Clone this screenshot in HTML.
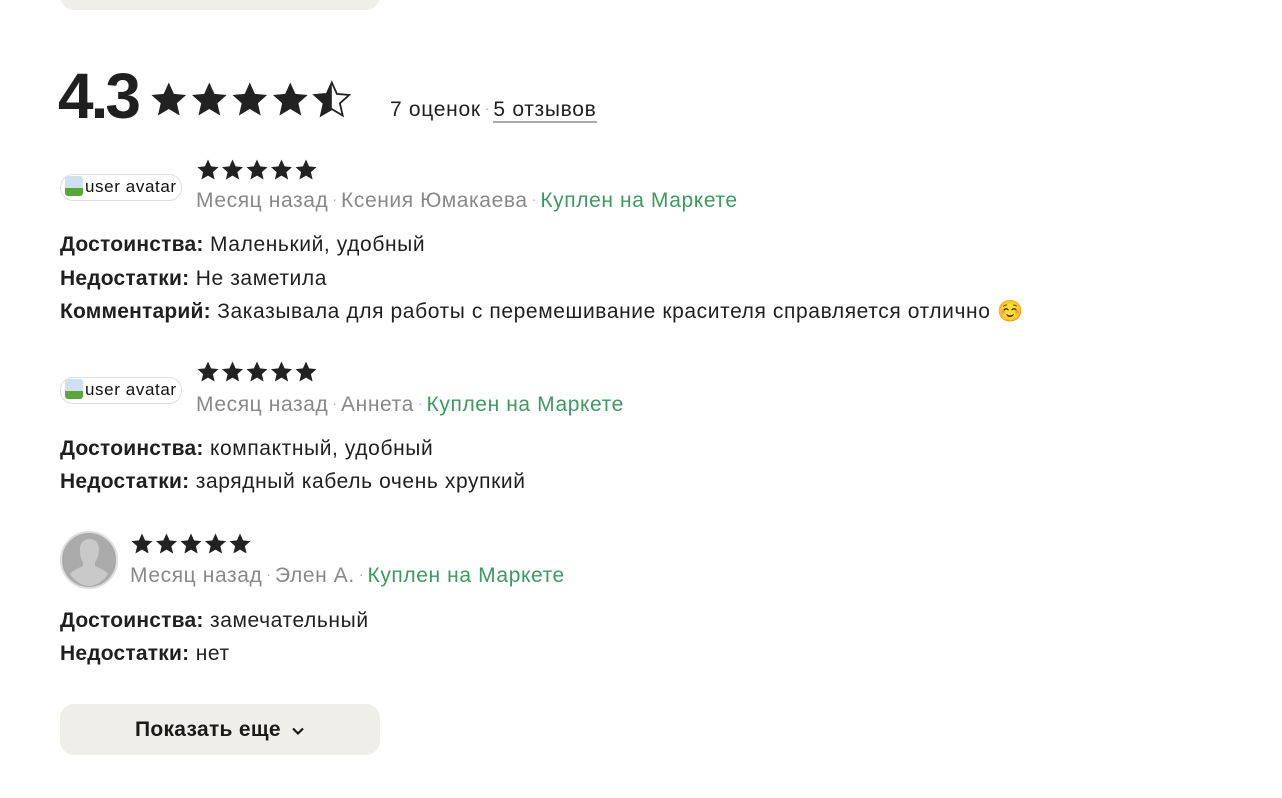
<!DOCTYPE html>
<html><head><meta charset="utf-8"><style>
body{margin:0;width:1282px;height:798px;background:#fff;font-family:"Liberation Sans","DejaVu Sans",sans-serif;color:#1f1f1f;position:relative;overflow:hidden}
.a{position:absolute;white-space:nowrap}
.t{font-size:21px;line-height:24px;letter-spacing:0.6px}
.g{color:#888}
.gr{color:#3c9a5e}
.dot{color:#aaa;font-size:14px;padding:0 4px;position:relative;top:-3px;letter-spacing:0}
b{font-weight:bold;letter-spacing:0.2px}
.btn{position:absolute;left:60px;width:320px;background:#efeeea;border-radius:14px}
.av{position:absolute;left:60px;width:120px;height:25px;border:1px solid #ddd;border-radius:13px;font-size:17px;line-height:24px;overflow:hidden;color:#111;letter-spacing:0.6px}
.av i{display:inline-block;width:18px;height:20px;vertical-align:-4px;background:linear-gradient(#cfe0ee 60%,#5aa63c 60%);margin:0 2px 0 4px;border-radius:3px}
</style></head><body>
<svg width="0" height="0" style="position:absolute"><defs><path id="s" d="M12 1.5l3.1 6.9 7.4.7-5.6 5 1.7 7.4L12 17.6l-6.6 3.9 1.7-7.4-5.6-5 7.4-.7z"/><clipPath id="h"><rect x="0" y="0" width="12" height="24"/></clipPath></defs></svg>
<div class="btn" style="top:-40px;height:50px"></div>
<div class="a" style="left:58px;top:58px;font-size:64px;font-weight:bold;line-height:76px;letter-spacing:-3px">4.3</div>
<svg class="a" style="left:149px;top:80px" width="204" height="40" viewBox="0 0 204 40">
<g fill="#222"><use href="#s" transform="translate(0,0) scale(1.65)"/><use href="#s" transform="translate(40.5,0) scale(1.65)"/><use href="#s" transform="translate(81,0) scale(1.65)"/><use href="#s" transform="translate(121.5,0) scale(1.65)"/></g>
<g transform="translate(163,0) scale(1.65)"><use href="#s" fill="none" stroke="#222" stroke-width="1.1"/><use href="#s" fill="#222" clip-path="url(#h)"/></g>
</svg>
<div class="a t" style="left:390px;top:98px;letter-spacing:0.7px">7 оценок<span class="dot">·</span><span style="border-bottom:2px solid #aaa">5 отзывов</span></div>

<div class="av" style="top:174px"><i></i>user avatar</div>
<svg class="a" style="left:196px;top:158px" width="122" height="24"><g fill="#222"><use href="#s"/><use href="#s" x="24.5"/><use href="#s" x="49"/><use href="#s" x="73.5"/><use href="#s" x="98"/></g></svg>
<div class="a t g" style="left:196px;top:189px">Месяц назад<span class="dot">·</span>Ксения Юмакаева<span class="dot">·</span><span class="gr">Куплен на Маркете</span></div>
<div class="a t" style="left:60px;top:233px"><b>Достоинства:</b> Маленький, удобный</div>
<div class="a t" style="left:60px;top:267px"><b>Недостатки:</b> Не заметила</div>
<div class="a t" style="left:60px;top:300px"><b>Комментарий:</b> Заказывала для работы с перемешивание красителя справляется отлично ☺️</div>

<div class="av" style="top:377px"><i></i>user avatar</div>
<svg class="a" style="left:196px;top:360px" width="122" height="24"><g fill="#222"><use href="#s"/><use href="#s" x="24.5"/><use href="#s" x="49"/><use href="#s" x="73.5"/><use href="#s" x="98"/></g></svg>
<div class="a t g" style="left:196px;top:393px">Месяц назад<span class="dot">·</span>Аннета<span class="dot">·</span><span class="gr">Куплен на Маркете</span></div>
<div class="a t" style="left:60px;top:437px"><b>Достоинства:</b> компактный, удобный</div>
<div class="a t" style="left:60px;top:470px"><b>Недостатки:</b> зарядный кабель очень хрупкий</div>

<svg class="a" style="left:60px;top:531px" width="58" height="58" viewBox="0 0 58 58"><circle cx="29" cy="29" r="28" fill="#aaa" stroke="#ddd" stroke-width="2"/><path d="M20 18c0-7 5-10 10-10s9 4 9 10c0 6-2 11-4 13v4c4 2 10 4 13 8-5 8-13 12-19 12s-14-4-19-12c3-4 9-6 13-8v-4c-2-2-3-6-3-13z" fill="#c9c9c9"/></svg>
<svg class="a" style="left:130px;top:532px" width="122" height="24"><g fill="#222"><use href="#s"/><use href="#s" x="24.5"/><use href="#s" x="49"/><use href="#s" x="73.5"/><use href="#s" x="98"/></g></svg>
<div class="a t g" style="left:130px;top:564px">Месяц назад<span class="dot">·</span>Элен А.<span class="dot">·</span><span class="gr">Куплен на Маркете</span></div>
<div class="a t" style="left:60px;top:609px"><b>Достоинства:</b> замечательный</div>
<div class="a t" style="left:60px;top:642px"><b>Недостатки:</b> нет</div>

<div class="btn" style="top:704px;height:51px;text-align:center;font-size:21px;line-height:51px;font-weight:bold;color:#1a1a1a;letter-spacing:0.3px">Показать еще <svg width="14" height="10" viewBox="0 0 14 10" style="margin-left:4px"><path d="M2 2.5l5 5 5-5" fill="none" stroke="#1a1a1a" stroke-width="2.2"/></svg></div>
</body></html>
